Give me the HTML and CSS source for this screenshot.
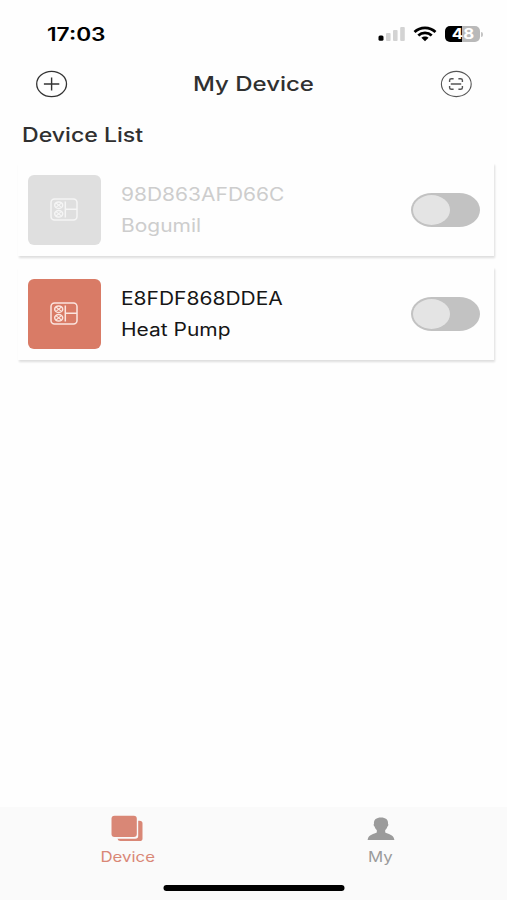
FILE: index.html
```
<!DOCTYPE html>
<html lang="en">
<head>
<meta charset="utf-8">
<title>My Device</title>
<link rel="stylesheet" href="styles.css">
</head>
<body>
<svg class="defs" width="0" height="0" aria-hidden="true">
  <symbol id="pump" viewBox="0 0 28 23">
    <g fill="none" stroke="currentColor" stroke-width="1.5">
      <rect x="1" y="1" width="26" height="21" rx="3.5"/>
      <path d="M15.3 3.5v16M15.3 11.3H27"/>
      <ellipse cx="8.7" cy="7.2" rx="4" ry="3.3"/>
      <ellipse cx="8.7" cy="15.8" rx="4" ry="3.3"/>
      <path stroke-width="1.1" d="M6 5l5.4 4.4M11.4 5L6 9.4M6 13.6l5.4 4.4M11.4 13.6L6 18"/>
    </g>
  </symbol>
</svg>
<header class="status">
  <span class="time wide">17:03</span>
  <div class="indicators">
    <svg width="28" height="16" viewBox="0 0 28 16">
      <rect x="0.5" y="9.5" width="5" height="5.3" rx="1.5" fill="#000"/>
      <g fill="#d3d3d3"><rect x="8" y="7" width="4.6" height="8" rx="1"/><rect x="15" y="4" width="4.6" height="11" rx="1"/><rect x="22.2" y="1" width="4.6" height="14" rx="1"/></g>
    </svg>
    <svg class="wifi" width="24" height="16" viewBox="0 0 24 16">
      <g fill="none" stroke="#000" stroke-width="2.7"><path d="M1.5 6C7.200.4 16.800.4 22.500 6"/><path d="M5.300 9.500c3.700-3.500 9.700-3.500 13.400 0"/></g>
      <path d="M12 15.200l-3.600-3.400c1.900-1.600 5.300-1.600 7.200 0z"/>
    </svg>
    <div class="battery"><span class="wide">48</span></div>
    <i class="cap"></i>
  </div>
</header>
<nav class="bar">
  <svg width="32" height="28" viewBox="0 0 32 28" fill="none" stroke="#333">
    <ellipse cx="15.6" cy="14" rx="14.9" ry="12.6" stroke-width="1.3"/>
    <path d="M7.900 14h15.400M15.600 7.500v13" stroke-width="1.4"/>
  </svg>
  <h1 class="wide">My Device</h1>
  <svg width="32" height="28" viewBox="0 0 32 28" fill="none" stroke="#555">
    <ellipse cx="16.3" cy="14" rx="14.9" ry="12.6" stroke-width="1.1"/>
    <path d="M9.600 12V10.300q0-1.500 1.800-1.500h2.200M18.400 8.800h2.200q1.800 0 1.800 1.500V12M22.400 16v1.700q0 1.500-1.800 1.500h-2.200M13.600 19.200h-2.200q-1.800 0-1.800-1.500V16M10.800 14h10.400" stroke-width="1.4"/>
  </svg>
</nav>
<main>
  <h2><span class="wide">Device List</span></h2>
  <section class="card offline">
    <div class="thumb"><svg width="28" height="23"><use href="#pump"/></svg></div>
    <div class="info"><span class="wide">98D863AFD66C</span><span class="wide">Bogumil</span></div>
    <div class="toggle"><i></i></div>
  </section>
  <section class="card">
    <div class="thumb"><svg width="28" height="23"><use href="#pump"/></svg></div>
    <div class="info"><span class="wide">E8FDF868DDEA</span><span class="wide">Heat Pump</span></div>
    <div class="toggle"><i></i></div>
  </section>
</main>
<footer>
  <div class="tabs">
    <div class="tab active">
      <svg width="32" height="27" viewBox="0 0 32 27" fill="currentColor">
        <rect x="0.5" y="0.7" width="25.3" height="21.3" rx="3"/>
        <path d="M27.200 5.800h1.300q3 0 3 2.600v15.100q0 2.600-3 2.600H9.500q-2.500 0-3-2.300h17.700q3 0 3-2.800z"/>
      </svg>
      <span class="wide">Device</span>
    </div>
    <div class="tab">
      <svg width="28" height="27" viewBox="0 0 28 27" fill="currentColor">
        <path d="M14 2.400c4.600 0 7.400 2.100 7 6.400.6.300.4 2.400-.7 2.900-.5 1.700-1.200 2.700-2.100 3.400v2.400c2.500 1.700 8.500 1.500 9.200 7.500H.6c.7-6 6.700-5.800 9.200-7.500v-2.400c-.9-.7-1.600-1.700-2.100-3.400-1.100-.5-1.300-2.600-.7-2.900-.4-4.300 2.400-6.400 7-6.400z"/>
      </svg>
      <span class="wide">My</span>
    </div>
  </div>
  <div class="home"></div>
</footer>
</body>
</html>
```
FILE: styles.css
```
* { box-sizing: border-box; }
body {
  margin: 0;
  width: 507px;
  height: 900px;
  display: flex;
  flex-direction: column;
  overflow: hidden;
  background: #fefefe;
  color: #303030;
  font-family: Inter, "Liberation Sans", sans-serif;
}
svg { display: block; flex: none; }
.defs { position: absolute; }
.wide {
  display: inline-block;
  white-space: nowrap;
  transform: scaleX(1.2);
  transform-origin: left center;
}
.status {
  height: 60px;
  padding: 8px 24px 0 47px;
  display: flex;
  align-items: center;
  justify-content: space-between;
}
.time { font-size: 18px; font-weight: 600; color: #000; transform: scaleX(1.26); }
.indicators { display: flex; align-items: center; }
.wifi { margin: 0 8px 0 7px; }
.battery {
  width: 35px;
  height: 16px;
  border-radius: 5px;
  background: linear-gradient(90deg, #000 48%, #b9b9b9 48%);
  display: flex;
  align-items: center;
  justify-content: center;
  color: #fff;
  font-size: 15px;
  font-weight: 700;
  line-height: 16px;
}
.battery .wide { transform: scaleX(1.12); transform-origin: center; }
.cap { width: 2px; height: 5px; margin-left: 1px; border-radius: 0 2px 2px 0; background: #c4c4c4; }
.bar {
  height: 48px;
  padding: 0 35px 0 36px;
  display: flex;
  align-items: center;
  justify-content: space-between;
}
h1, h2 { margin: 0; font-weight: 500; }
h1.wide { font-size: 20px; margin-left: -1px; transform-origin: center; }
h2 { height: 55px; padding-left: 21.5px; font-size: 19.5px; line-height: 54px; }
h2 .wide { transform: scaleX(1.185); }
main { flex: 1; }
.card {
  height: 93px;
  margin: 0 13px 11px 18px;
  padding: 1px 14px 0 10px;
  display: flex;
  align-items: center;
  background: #fefefe;
  box-shadow: 1px 1.5px 2px #dedede;
}
.thumb {
  width: 73px;
  height: 70px;
  padding: 0 2px 1px 0;
  border-radius: 6px;
  display: flex;
  align-items: center;
  justify-content: center;
  background: #d97b66;
  color: #fbe5df;
}
.info {
  flex: 1;
  padding-left: 20px;
  display: flex;
  flex-direction: column;
  align-items: flex-start;
  color: #161616;
  font-size: 18px;
  line-height: 31.5px;
}
.info .wide { transform: scaleX(1.165); }
.offline .thumb { background: #dfdfdf; color: #f5f5f5; }
.offline .info { color: #cdcdcd; }
.toggle {
  width: 69px;
  height: 34px;
  padding: 2px;
  border-radius: 21px / 17px;
  background: #c2c2c2;
}
.toggle i { display: block; width: 37px; height: 30px; border-radius: 50%; background: #e4e4e4; }
footer { height: 93px; background: #fafafa; }
.tabs { display: grid; grid-template-columns: 1fr 1fr; height: 78px; }
.tab {
  display: flex;
  flex-direction: column;
  align-items: center;
  padding: 8px 0 0 1px;
  color: #9b9b9b;
  font-size: 14px;
  line-height: 30px;
}
.tab.active { color: #d98776; }
.tab .wide { transform-origin: center; }
.home { width: 181px; height: 6px; margin: 0 auto; border-radius: 3px; background: #000; transform: translateX(0.5px); }
```
